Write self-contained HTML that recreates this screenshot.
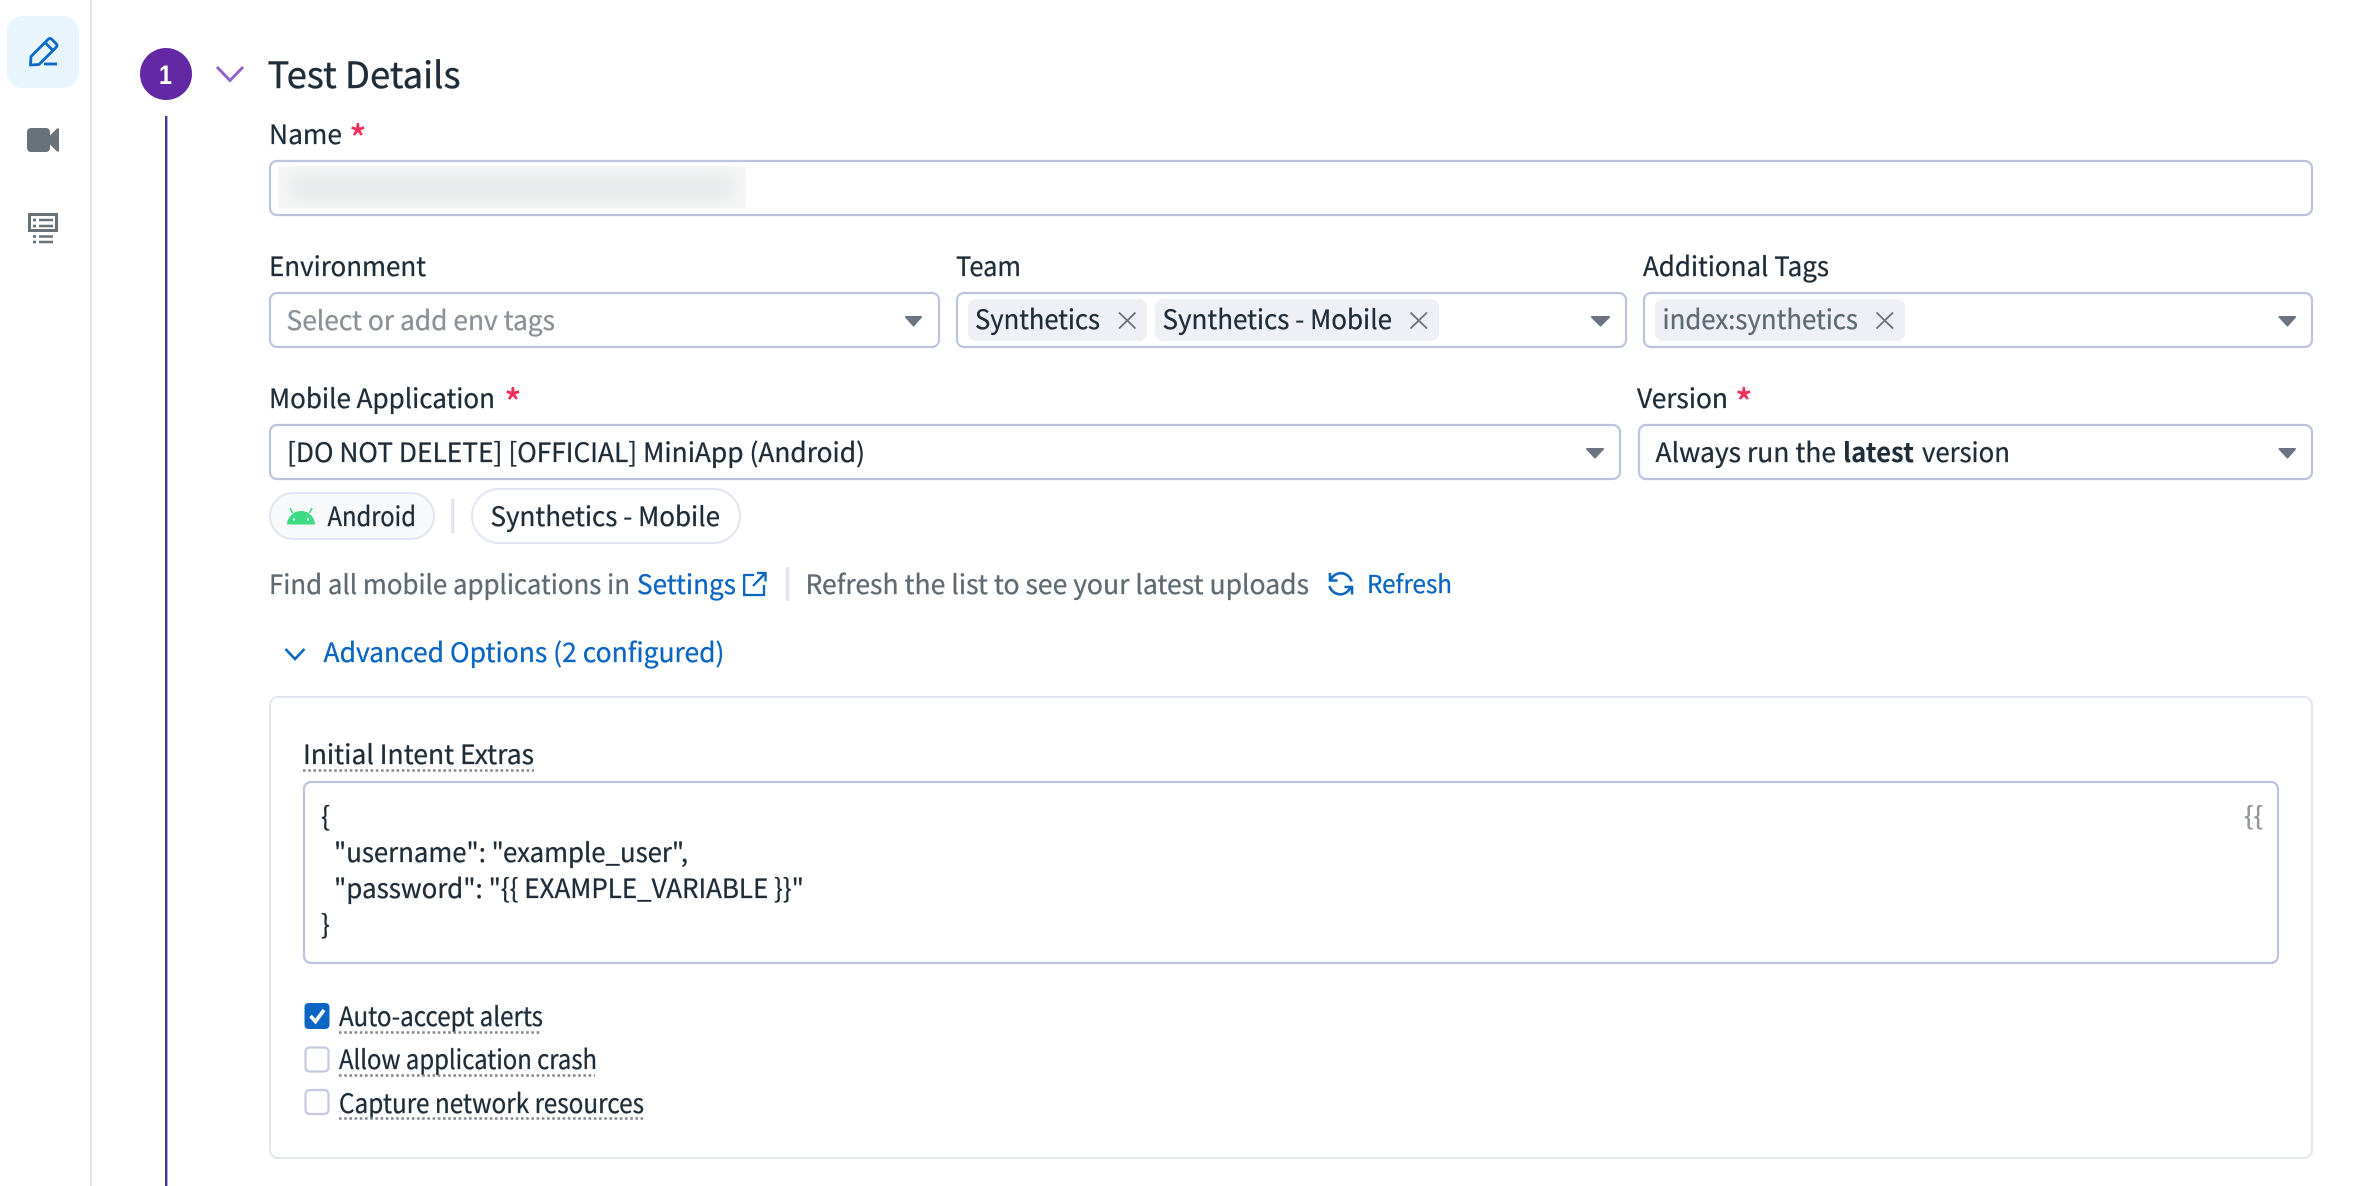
<!DOCTYPE html>
<html lang="en"><head><meta charset="utf-8"><title>Test Details</title>
<style>
html,body{margin:0;padding:0;background:#fff}
svg{display:block}
text{font-family:"Noto Sans CJK JP","Liberation Sans",sans-serif;font-size:26.500px;fill:#1f2d38;stroke:#1f2d38;stroke-width:.3px;white-space:pre}
.g{fill:#5f6b73;stroke:#5f6b73}.p{fill:#8b9297;stroke:#8b9297}.b{fill:#0b66c3;stroke:#0b66c3}
.r{fill:#f0305a;stroke:#f0305a;font-size:38px;stroke-width:.4px}
.box{fill:#fff;stroke:#bcc3dc;stroke-width:2.200}
.car{fill:#6b7480;stroke:#6b7480;stroke-width:2;stroke-linejoin:round}
.x{stroke:#6b7378;stroke-width:1.900;fill:none}
.chip{fill:#eff0f6}
.dot{stroke:#83888f;stroke-width:2.600;stroke-dasharray:2.600 2.600;fill:none}
</style></head><body>
<svg xmlns="http://www.w3.org/2000/svg" width="2360" height="1186" viewBox="0 0 2360 1186">
<defs>
<filter id="bl" x="-10%" y="-100%" width="120%" height="300%"><feGaussianBlur stdDeviation="7"/></filter>
<clipPath id="cp"><rect x="278" y="166" width="468" height="42"/></clipPath>
</defs>
<rect width="2360" height="1186" fill="#fff"/>

<!-- sidebar -->
<rect x="90" y="0" width="2" height="1186" fill="#e1e2f1"/>
<rect x="7" y="16" width="72" height="72" rx="16" fill="#e8f5fd"/>
<g fill="none" stroke="#0b6ac6" stroke-width="2.800">
<path d="M31 56.500L48 39.500Q50 37.500 52 39.500L56 43.500Q58 45.500 56 47.500L39 64.500L30.500 65Z" stroke-linejoin="round"/>
<path d="M45 42.500L53 50.500"/>
<path d="M44 64H57"/>
</g>
<rect x="27" y="128" width="23" height="24" rx="4" fill="#697278"/>
<path d="M49 136.500L57 128.500Q59 127.500 59 130V150Q59 152.500 57 151.500L49 143.500Z" fill="#697278"/>
<g fill="none" stroke="#697278">
<rect x="29.500" y="214.500" width="27" height="16" stroke-width="3"/>
<path d="M39 220H53M39 226H53M39 236.500H53M39 242H53" stroke-width="2.500"/>
<path d="M33 220H36M33 226H36M33 236.500H36M33 242H36" stroke-width="2.800"/>
</g>

<!-- step header -->
<circle cx="166" cy="74" r="26" fill="#6329a5"/>
<text x="159" y="84" textLength="13" lengthAdjust="spacingAndGlyphs" style="font-family:'Liberation Sans',sans-serif;font-size:27px;font-weight:700;fill:#fff;stroke:none">1</text>
<path d="M217 67L230 80.500L243 67" fill="none" stroke="#8f65c4" stroke-width="3"/>
<text x="267.500" y="88" textLength="193" lengthAdjust="spacingAndGlyphs" style="font-size:36px;stroke-width:.4px">Test Details</text>
<rect x="165" y="116" width="2.400" height="1070" fill="#4a3391"/>

<!-- Name -->
<text x="269" y="144" textLength="73" lengthAdjust="spacingAndGlyphs">Name</text>
<text class="r" x="349" y="153.500">*</text>
<rect class="box" x="270" y="161" width="2042" height="54" rx="7"/>
<g clip-path="url(#cp)">
<rect x="278" y="166" width="468" height="42" fill="#f5f6f6"/>
<rect x="290" y="174" width="444" height="27" fill="#e9eaeb" filter="url(#bl)"/>
</g>

<!-- Row 1 -->
<text x="269" y="276" textLength="157" lengthAdjust="spacingAndGlyphs">Environment</text>
<rect class="box" x="270" y="293" width="669" height="54" rx="7"/>
<text class="p" x="286.500" y="330" textLength="268.500" lengthAdjust="spacingAndGlyphs">Select or add env tags</text>
<path class="car" d="M906 317H921L913.500 325.500Z"/>

<text x="956" y="276" textLength="65" lengthAdjust="spacingAndGlyphs">Team</text>
<rect class="box" x="957" y="293" width="669" height="54" rx="7"/>
<rect class="chip" x="968" y="299" width="179" height="42" rx="8"/>
<text x="975" y="329" textLength="125" lengthAdjust="spacingAndGlyphs">Synthetics</text>
<path class="x" d="M1119 312.500L1135.500 328.500M1135.500 312.500L1119 328.500"/>
<rect class="chip" x="1155" y="299" width="284" height="42" rx="8"/>
<text x="1162.500" y="329" textLength="229.500" lengthAdjust="spacingAndGlyphs">Synthetics - Mobile</text>
<path class="x" d="M1410.500 312.500L1427 328.500M1427 312.500L1410.500 328.500"/>
<path class="car" d="M1592 317H1609L1600.500 325.500Z"/>

<text x="1643" y="276" textLength="186" lengthAdjust="spacingAndGlyphs">Additional Tags</text>
<rect class="box" x="1644" y="293" width="668" height="54" rx="7"/>
<rect class="chip" x="1655" y="299" width="250" height="42" rx="8"/>
<text class="g" x="1662.500" y="329" textLength="195.500" lengthAdjust="spacingAndGlyphs">index:synthetics</text>
<path class="x" d="M1876.500 312.500L1893 328.500M1893 312.500L1876.500 328.500"/>
<path class="car" d="M2279.500 317H2295L2287.500 325.500Z"/>

<!-- Row 2 -->
<text x="269" y="408" textLength="226" lengthAdjust="spacingAndGlyphs">Mobile Application</text>
<text class="r" x="504" y="417.500">*</text>
<rect class="box" x="270" y="425" width="1350" height="54" rx="7"/>
<text x="287" y="462" textLength="578" lengthAdjust="spacingAndGlyphs">[DO NOT DELETE] [OFFICIAL] MiniApp (Android)</text>
<path class="car" d="M1587 449H1603L1595 457.500Z"/>

<text x="1637" y="408" textLength="91" lengthAdjust="spacingAndGlyphs">Version</text>
<text class="r" x="1735" y="417.500">*</text>
<rect class="box" x="1639" y="425" width="673" height="54" rx="7"/>
<text x="1655.500" y="462" textLength="180.500" lengthAdjust="spacingAndGlyphs">Always run the</text>
<text x="1843" y="462" textLength="71" lengthAdjust="spacingAndGlyphs" style="font-weight:700;stroke:none">latest</text>
<text x="1922" y="462" textLength="88" lengthAdjust="spacingAndGlyphs">version</text>
<path class="car" d="M2279.500 449H2295L2287.500 457.500Z"/>

<!-- pills -->
<rect x="270" y="493" width="164" height="46" rx="23" fill="#f8f9fb" stroke="#e2e4ef" stroke-width="2"/>
<path d="M287 524.500A14 13.500 0 0 1 315 524.500Z" fill="#3ddc84"/>
<path d="M292.500 513L290 508M309.500 513L312 508" stroke="#3ddc84" stroke-width="1.600" fill="none"/>
<circle cx="294" cy="519.500" r="1.200" fill="#fff"/><circle cx="308" cy="519.500" r="1.200" fill="#fff"/>
<text x="327.500" y="526" textLength="88.500" lengthAdjust="spacingAndGlyphs">Android</text>
<rect x="451" y="499" width="3.500" height="34" fill="#e2e4ef"/>
<rect x="472" y="489" width="268" height="54" rx="27" fill="#fff" stroke="#e2e4ef" stroke-width="2"/>
<text x="490.500" y="526" textLength="229.500" lengthAdjust="spacingAndGlyphs">Synthetics - Mobile</text>

<!-- help line -->
<text class="g" x="269" y="594" textLength="361" lengthAdjust="spacingAndGlyphs">Find all mobile applications in</text>
<text class="b" x="637" y="594" textLength="99" lengthAdjust="spacingAndGlyphs">Settings</text>
<g fill="none" stroke="#0b66c3" stroke-width="2.300">
<path d="M754 575H744.200V595H764V585"/>
<path d="M753 586L765 573.500M757 573H765.500V581.500"/>
</g>
<rect x="786" y="567" width="3.500" height="34" fill="#e2e4ef"/>
<text class="g" x="805.500" y="594" textLength="503.500" lengthAdjust="spacingAndGlyphs">Refresh the list to see your latest uploads</text>
<g fill="none" stroke="#0b66c3" stroke-width="2.600">
<path d="M1351.500 581.500A11 11 0 0 0 1333 576.500L1330 580"/>
<path d="M1330 573V580.500H1337.500"/>
<path d="M1329.500 586A11 11 0 0 0 1348 591L1351.500 587"/>
<path d="M1352 594.500V587H1344.500"/>
</g>
<text class="b" x="1367" y="593" textLength="85" lengthAdjust="spacingAndGlyphs" style="font-size:24.500px">Refresh</text>

<!-- advanced -->
<path d="M285.500 649L295 659L304.500 649" fill="none" stroke="#0b66c3" stroke-width="2.600"/>
<text class="b" x="323.500" y="662" textLength="401" lengthAdjust="spacingAndGlyphs">Advanced Options (2 configured)</text>

<rect x="270" y="697" width="2042" height="461" rx="8" fill="#fff" stroke="#e3e5ef" stroke-width="2"/>
<text x="303" y="764" textLength="231" lengthAdjust="spacingAndGlyphs">Initial Intent Extras</text>
<path class="dot" d="M303 770.500H534"/>
<rect class="box" x="304" y="782" width="1974" height="181" rx="7"/>
<text x="321" y="826">{</text>
<text x="334" y="862" textLength="354" lengthAdjust="spacingAndGlyphs">"username": "example_user",</text>
<text x="334" y="898" textLength="470" lengthAdjust="spacingAndGlyphs">"password": "{{ EXAMPLE_VARIABLE }}"</text>
<text x="321" y="934">}</text>
<text x="2244" y="825" textLength="19" lengthAdjust="spacingAndGlyphs" style="fill:#8f9699;stroke:#8f9699;font-size:25px">{{</text>

<!-- checkboxes -->
<rect x="304.500" y="1003" width="25" height="26" rx="4" fill="#0b66c3"/>
<path d="M310.500 1016L315.500 1021.500L324 1010" fill="none" stroke="#fff" stroke-width="3.600"/>
<text x="339" y="1026" textLength="204" lengthAdjust="spacingAndGlyphs">Auto-accept alerts</text>
<path class="dot" d="M339 1032.500H541"/>
<rect x="305.500" y="1047.500" width="23" height="24" rx="4" fill="#fff" stroke="#c3c9e0" stroke-width="2.200"/>
<text x="339" y="1069" textLength="258" lengthAdjust="spacingAndGlyphs">Allow application crash</text>
<path class="dot" d="M339 1075.500H595"/>
<rect x="305.500" y="1090" width="23" height="24" rx="4" fill="#fff" stroke="#c3c9e0" stroke-width="2.200"/>
<text x="339" y="1113" textLength="305" lengthAdjust="spacingAndGlyphs">Capture network resources</text>
<path class="dot" d="M339 1118.500H643"/>
</svg>
</body></html>
